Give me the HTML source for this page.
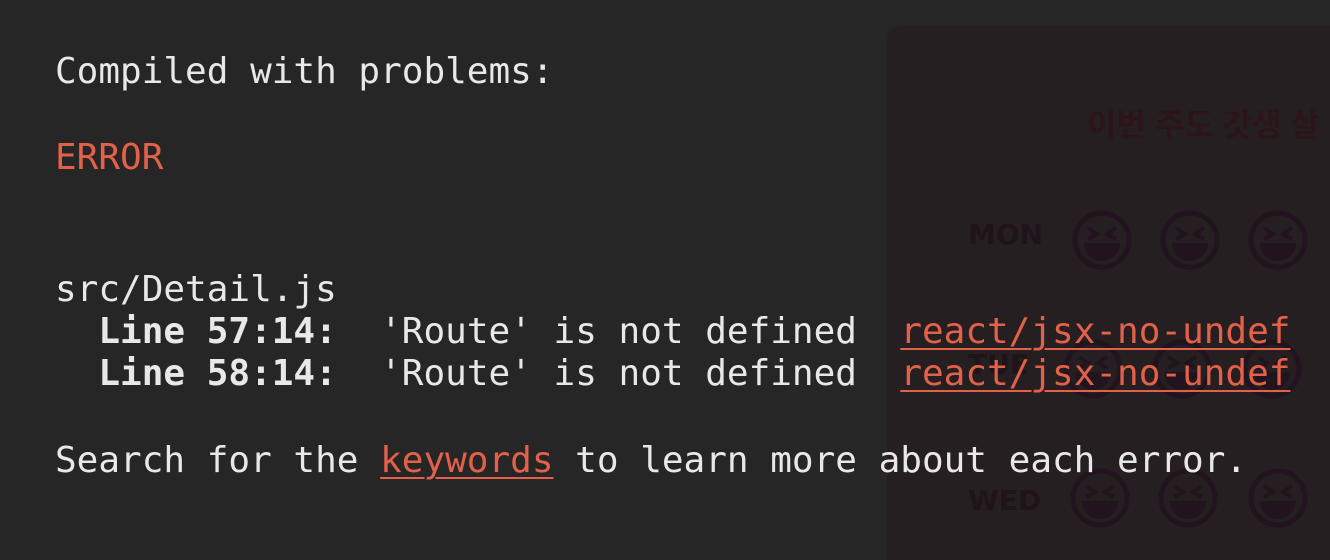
<!DOCTYPE html>
<html><head><meta charset="utf-8"><style>
html,body{margin:0;width:1330px;height:560px;overflow:hidden;background:#262626;position:relative;}
.card{position:absolute;left:887px;top:26px;width:443px;height:534px;background:#251f21;border-radius:14px 0 0 0;}
.t{position:absolute;white-space:pre;font-family:"DejaVu Sans Mono","Liberation Mono",monospace;font-size:36px;line-height:42px;color:#e8e8e8;}
.r{color:#e36049;}
a{color:#e36049;text-decoration:underline;text-underline-offset:5px;text-decoration-thickness:2px;}
b{font-weight:bold;}
.ko{position:absolute;left:1087px;top:100px;font-family:"Liberation Sans","Noto Sans CJK KR",sans-serif;font-weight:bold;font-size:32px;color:#2b1519;white-space:nowrap;}
.d{position:absolute;font-family:"DejaVu Sans","Liberation Sans",sans-serif;font-weight:bold;font-size:28px;color:#1f1419;}
</style></head><body>
<div class="card"></div>
<div class="ko">이번 주도 갓생 살</div>
<div class="d" style="left:968px;top:218px">MON</div>
<div class="d" style="left:968px;top:348px">TUE</div>
<div class="d" style="left:968px;top:484px">WED</div>
<svg width="1330" height="560" style="position:absolute;left:0;top:0">
<defs><g id="f"><circle r="27" fill="none" stroke="#22141e" stroke-width="5"/><path d="M-14 -12 L-5 -6 L-14 -1 M14 -12 L5 -6 L14 -1" fill="none" stroke="#22141e" stroke-width="4"/><path d="M-18 3 H18 A18 18 0 0 1 -18 3Z" fill="#22141e"/></g></defs>
<use href="#f" x="1102" y="240"/><use href="#f" x="1190" y="240"/><use href="#f" x="1278" y="240"/>
<use href="#f" x="1093" y="369"/><use href="#f" x="1182" y="369"/><use href="#f" x="1272" y="369"/>
<use href="#f" x="1100" y="498"/><use href="#f" x="1188" y="498"/><use href="#f" x="1278" y="498"/>
</svg>
<div class="t" style="left:55px;top:51px">Compiled with problems:</div>
<div class="t r" style="left:55px;top:137px">ERROR</div>
<div class="t" style="left:55px;top:269px">src/Detail.js</div>
<div class="t" style="left:55px;top:311px">  <b>Line 57:14:</b>  'Route' is not defined  <a>react/jsx-no-undef</a></div>
<div class="t" style="left:55px;top:353px">  <b>Line 58:14:</b>  'Route' is not defined  <a>react/jsx-no-undef</a></div>
<div class="t" style="left:55px;top:440px">Search for the <a>keywords</a> to learn more about each error.</div>
</body></html>
